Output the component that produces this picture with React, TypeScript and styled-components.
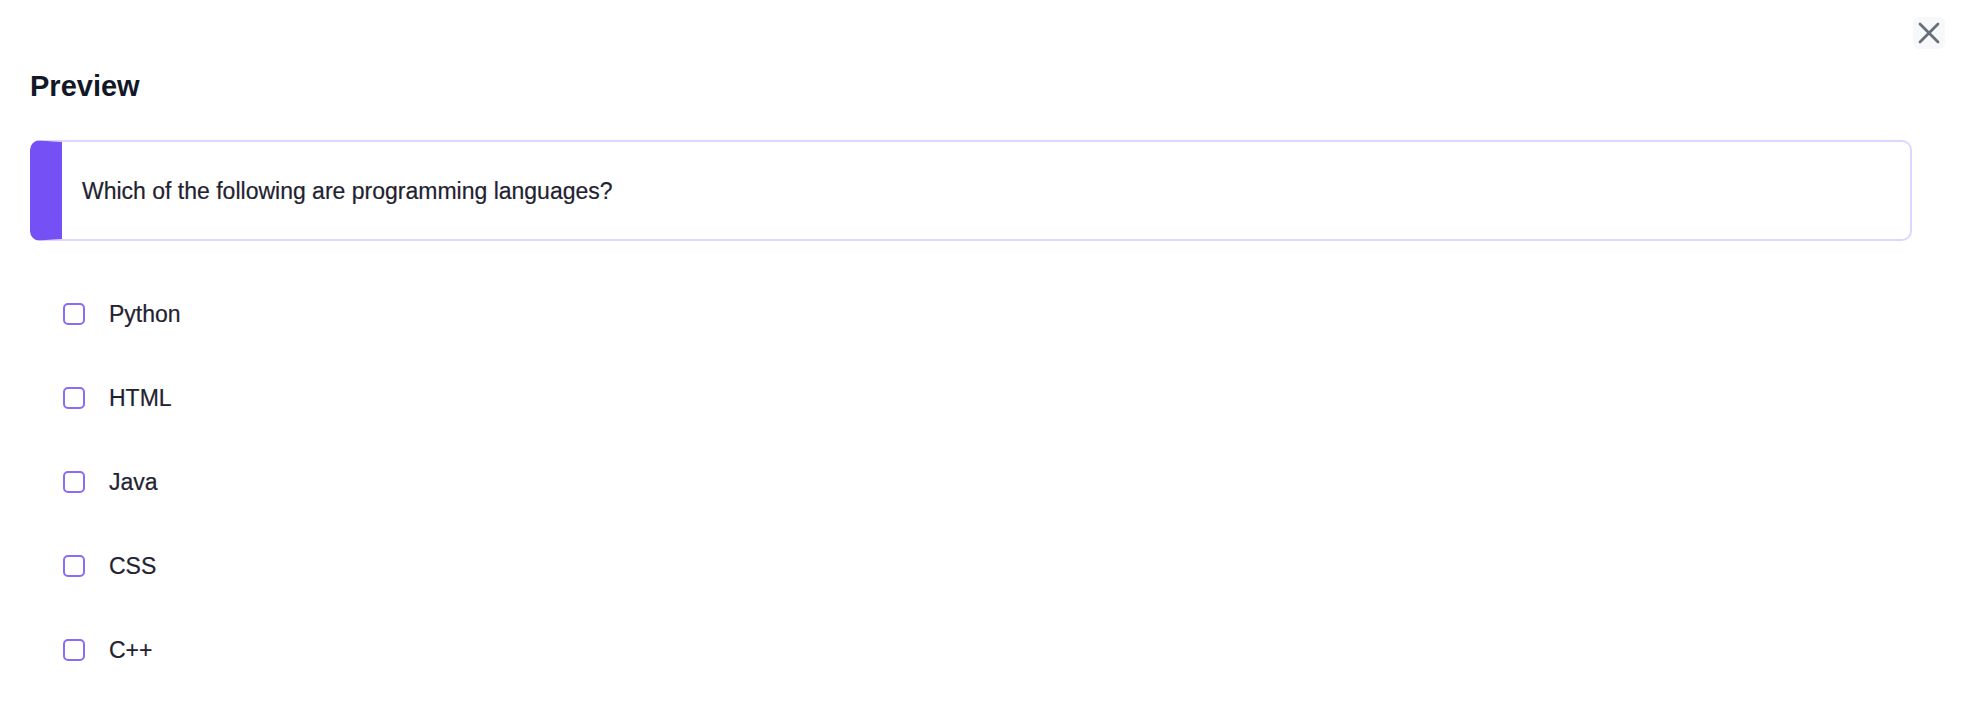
import React from 'react';
import styled, { createGlobalStyle } from 'styled-components';

const GlobalStyle = createGlobalStyle`
  html, body {
    margin: 0;
    padding: 0;
    background: #ffffff;
  }
  body {
    font-family: 'Liberation Sans', Arial, sans-serif;
    color: #1f2230;
  }
`;

const Page = styled.div`
  min-height: 100vh;
  box-sizing: border-box;
  padding: 17px 20px 0 30px;
  background: #ffffff;
`;

const TopBar = styled.div`
  display: flex;
  justify-content: flex-end;
  height: 32px;
`;

const CloseButton = styled.button`
  width: 32px;
  height: 32px;
  padding: 0;
  border: none;
  border-radius: 6px;
  background: #f7f8fa;
  color: #676d7a;
  display: flex;
  align-items: center;
  justify-content: center;
  cursor: pointer;
`;

const Title = styled.h2`
  margin: 20px 0 0 0;
  font-size: 29px;
  line-height: 34px;
  font-weight: 700;
  color: #121826;
`;

const QuestionCard = styled.div`
  margin: 37px 33px 0 0;
  height: 101px;
  box-sizing: border-box;
  border: 2px solid #ddd6fe;
  border-left: 32px solid #7450f5;
  border-radius: 10px;
  display: flex;
  align-items: center;
  padding-left: 20px;
`;

const QuestionText = styled.p`
  margin: 0;
  font-size: 23px;
  line-height: 28px;
  color: #1f2230;
  -webkit-text-stroke: 0.2px #1f2230;
`;

const OptionList = styled.ul`
  list-style: none;
  margin: 31px 0 0 0;
  padding: 0 0 0 33px;
`;

const OptionRow = styled.li`
  display: flex;
  align-items: center;
  gap: 24px;
  height: 84px;
`;

const CheckBox = styled.span`
  width: 22px;
  height: 22px;
  box-sizing: border-box;
  border: 2px solid #8b6bf7;
  border-radius: 5px;
  background: #ffffff;
  flex-shrink: 0;
`;

const OptionLabel = styled.span`
  font-size: 23px;
  line-height: 28px;
  color: #1f2230;
  -webkit-text-stroke: 0.2px #1f2230;
`;

const options = ['Python', 'HTML', 'Java', 'CSS', 'C++'];

const App: React.FC = () => {
  return (
    <>
      <GlobalStyle />
      <Page>
        <TopBar>
          <CloseButton aria-label="Close">
            <svg width="24" height="24" viewBox="0 0 24 24" fill="none">
              <path
                d="M3 3 L21 21 M21 3 L3 21"
                stroke="currentColor"
                strokeWidth="2.8"
                strokeLinecap="round"
              />
            </svg>
          </CloseButton>
        </TopBar>

        <Title>Preview</Title>

        <QuestionCard>
          <QuestionText>Which of the following are programming languages?</QuestionText>
        </QuestionCard>

        <OptionList>
          {options.map(option => (
            <OptionRow key={option}>
              <CheckBox role="checkbox" aria-checked="false" />
              <OptionLabel>{option}</OptionLabel>
            </OptionRow>
          ))}
        </OptionList>
      </Page>
    </>
  );
};

export default App;
